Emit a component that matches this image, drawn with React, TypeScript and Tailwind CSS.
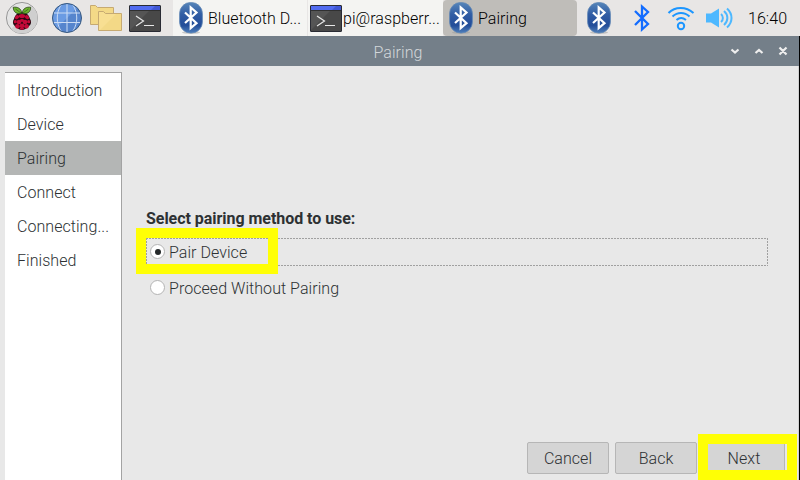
import React from "react";

const face = "font-['Roboto'] font-light text-[16px] leading-[20px] tracking-[0.05px] whitespace-nowrap";
const light = `${face} pt-0.5`;

function RaspberryIcon() {
  const drupes = [[15.3, 22.4], [28.7, 22.4], [19, 22.7], [25, 22.7], [17.5, 27], [26.5, 27], [22, 26.5]];
  return (
    <svg width="44" height="36" viewBox="0 0 44 36" className="shrink-0">
      <circle cx="22" cy="18" r="15.6" fill="#e4e4e4" stroke="#999" />
      <path d="M11 29 33 7A15 15 0 0 1 11 29Z" fill="#cfcfcf" />
      <path d="M22 12c-4 0-7 3-8 7-2 3-1 6 2 8 2 2 4 3 6 3s4-1 6-3c3-2 4-5 2-8-1-4-4-7-8-7Z" fill="#280911" />
      <g fill="#c30938">
        <ellipse cx="22" cy="16" rx="3.1" ry="2.1" />
        <ellipse cx="17" cy="17.2" rx="2.3" ry="1.8" transform="rotate(-40 17 17.2)" />
        <ellipse cx="27" cy="17.2" rx="2.3" ry="1.8" transform="rotate(40 27 17.2)" />
        {drupes.map(([x, y]) => (
          <circle key={`${x}-${y}`} cx={x} cy={y - 0.7} r={x < 16 || x > 28 ? 1.6 : 2.35} />
        ))}
        <ellipse cx="22" cy="20.3" rx="2" ry="1.6" />
        <ellipse cx="22" cy="28.7" rx="2.2" ry="1.1" />
      </g>
      <path d="M21.8 13.4C17 14.5 13.5 12.5 13.2 7.3c4-.7 8.2 1 8.6 6.1ZM22.2 13.4c4.8 1.1 8.3-.9 8.6-6.1-4-.7-8.2 1-8.6 6.1Z" fill="#6cb52d" stroke="#284018" strokeWidth=".8" />
      <path d="m15.5 9 5.5 4m7.500-4L23 13" stroke="#315820" strokeWidth=".7" />
    </svg>
  );
}

function GlobeIcon() {
  return (
    <svg width="32" height="36" viewBox="0 0 32 36" fill="none" className="shrink-0">
      <circle cx="16" cy="18" r="14.5" fill="#5685cd" />
      <path d="M5.7 28.3A14.5 14.5 0 0 1 26.3 7.7Z" fill="#6a9be3" />
      <path d="M16 4v28M3 13h26M2 22.5h28M10 5c-5 8-5 18 0 26M22 5c5 8 5 18 0 26" stroke="#cbdcf4" />
      <circle cx="16" cy="18" r="14.5" stroke="#38597f" />
    </svg>
  );
}

function FoldersIcon() {
  return (
    <svg width="32" height="36" viewBox="0 0 32 36" className="shrink-0">
      <g fill="#f3d987" stroke="#c6aa72">
        <path d="M.5 24.5v-19h5l2 2h16v17Z" />
        <path d="M8.5 30.5v-19h5l2 2h16v17Z" />
      </g>
      <path d="M9 30V12h4l2 2h11L10 30Z" fill="#f8df92" />
    </svg>
  );
}

function TerminalIcon() {
  return (
    <svg width="32" height="36" viewBox="0 0 32 36" fill="none" className="shrink-0">
      <rect x=".5" y="5.5" width="31" height="26" rx=".5" fill="#484848" stroke="#292b34" />
      <path d="M1 31V10h20L1 30Z" fill="#555" />
      <path d="M1 6h30v4H1Z" fill="#4057d5" />
      <path d="M1 6h25l-4 4H1Z" fill="#526cf0" />
      <path d="M1 10.5h30" stroke="#303030" />
      <path d="m7 16 7.5 5L7 26M15 25.5h10" stroke="#e7e7e7" strokeWidth="1.2" />
    </svg>
  );
}

function BluetoothBadge() {
  return (
    <svg width="24" height="36" viewBox="0 0 24 36" fill="none" className="shrink-0">
      <defs>
        <linearGradient id="badge" x1="0" y1="0" x2="0" y2="1">
          <stop stopColor="#5685b9" />
          <stop offset=".4" stopColor="#305ca4" />
          <stop offset=".75" stopColor="#234d99" />
          <stop offset="1" stopColor="#4e7fbb" />
        </linearGradient>
      </defs>
      <ellipse cx="12" cy="32.5" rx="9" ry="1.5" fill="#999" opacity=".5" />
      <rect x=".6" y="2.5" width="22.8" height="30.5" rx="11" fill="url(#badge)" stroke="#6087b5" strokeWidth=".8" />
      <path d="m6 12.500 11.500 10.700-5.800 5V7.500l5.800 5L6 23" stroke="#fff" strokeWidth="2.2" />
    </svg>
  );
}

function Task({ label, active = false, terminal = false, width }: { label: string; active?: boolean; terminal?: boolean; width: string }) {
  return (
    <div className={`flex h-9 shrink-0 items-center ${width} ${active ? "rounded-sm bg-[#bfbdb9]" : "bg-[#f4f4f2]"} ${terminal ? "border-l border-[#e8e6e5] pl-[2px]" : "pl-[6px]"}`}>
      {terminal ? <TerminalIcon /> : <BluetoothBadge />}
      <span className={`${light} text-black ${terminal ? "pl-px" : "pl-[5px]"}`}>{label}</span>
    </div>
  );
}

function Taskbar() {
  return (
    <header className="flex h-9 items-center bg-[#e8e6e5]">
      <RaspberryIcon />
      <div className="flex gap-[7px] pl-[7px]">
        <GlobeIcon />
        <FoldersIcon />
        <TerminalIcon />
      </div>
      <div className="ml-[12px] flex">
        <Task label="Bluetooth D..." width="w-[134px]" />
        <Task label="pi@raspberr..." terminal width="w-[136px]" />
        <Task label="Pairing" active width="w-[134px]" />
      </div>
      <div className="flex pl-[10px]">
        <BluetoothBadge />
        <svg width="32" height="36" viewBox="0 0 32 36" fill="none" className="ml-[15px]">
          <path d="m9 11 13 13-6 5.500V6.500l6 5.500L9 25" stroke="#126cff" strokeWidth="2.3" />
        </svg>
        <svg width="28" height="36" viewBox="0 0 28 36" fill="none" className="ml-[9px]">
          <g stroke="#1c96ff" strokeWidth="2">
            <path d="M1.500 13C8 6.200 19 6.200 26.500 13M5.500 16.500c5-4.800 12-4.800 17 0M9.500 20c2.800-2.500 6.500-2.500 9.500 0" />
            <circle cx="14" cy="26" r="3.2" />
          </g>
        </svg>
        <svg width="28" height="36" viewBox="0 0 28 36" fill="none" className="ml-[10px]">
          <path d="M1 13.500h5l8-5v19l-8-5H1Z" fill="#4db8ff" />
          <path d="M16 14c2.500 2 2.500 6 0 8M19 11c4.500 4 4.500 10 0 14M22 8.500c6 5.500 6 13.500 0 19" stroke="#4db8ff" strokeWidth="2" />
        </svg>
      </div>
      <time className={`${light} ml-[15px] text-black`}>16:40</time>
    </header>
  );
}

function TitleBar() {
  return (
    <div className="flex h-[30px] items-center bg-[#747f89] pr-[10px] text-[#eee]">
      <h1 className={`${face} flex-1 pl-[67px] pt-1 text-center text-[#d3d7da]`}>Pairing</h1>
      <svg width="60" height="12" viewBox="0 0 60 12" fill="none" stroke="currentColor" strokeWidth="2.2">
        <path d="m2.500 4.500 3.500 3 3.500-3M26.500 8l3.500-3 3.500 3M50.500 2.500l7 7m0-7-7 7" />
      </svg>
    </div>
  );
}

function RadioMark({ checked = false }: { checked?: boolean }) {
  return (
    <span className="mb-px flex h-[15px] w-[15px] shrink-0 items-center justify-center rounded-full border border-[#b3b3b3] bg-white">
      {checked && <span className="h-[6px] w-[6px] rounded-full bg-[#242829]" />}
    </span>
  );
}

const steps = ["Introduction", "Device", "Pairing", "Connect", "Connecting...", "Finished"];

export default function App() {
  return (
    <div className="relative flex h-[480px] w-[800px] flex-col overflow-hidden bg-[#e8e8e8] text-[#2d3133]">
      <Taskbar />
      <div className="flex min-h-0 flex-1 flex-col border-r border-black">
        <TitleBar />
        <div className="flex min-h-0 flex-1 border-r border-[#d0d0d0]">
          <nav className="ml-[5px] mt-[6px] w-[117px] shrink-0 border-r border-t border-[#a3a3a3] bg-white">
            {steps.map((step) => (
              <div key={step} className={`${light} flex h-[34px] items-center pl-3 ${step === "Pairing" ? "bg-[#b4b6b5]" : ""}`}>
                {step}
              </div>
            ))}
          </nav>
          <main className="flex flex-1 flex-col pl-6">
            <h2 className="mt-[143px] font-['Roboto'] text-[16px] font-bold leading-[20px] tracking-[-0.04px]">Select pairing method to use:</h2>
            <div className="mt-[9px] flex h-[28px] w-[622px] items-center gap-1 pl-1 [background:linear-gradient(90deg,#a0a0a0_2px,transparent_2px)_0_0/3px_1px_repeat-x,linear-gradient(90deg,#a0a0a0_2px,transparent_2px)_0_100%/3px_1px_repeat-x,linear-gradient(#a0a0a0_2px,transparent_2px)_0_0/1px_3px_repeat-y,linear-gradient(#a0a0a0_2px,transparent_2px)_100%_0/1px_3px_repeat-y]">
              <RadioMark checked />
              <span className={light}>Pair Device</span>
            </div>
            <div className="mt-[8px] flex h-[28px] items-center gap-1 pl-1">
              <RadioMark />
              <span className={light}>Proceed Without Pairing</span>
            </div>
            <div className="mb-[6px] mr-[13px] mt-auto flex justify-end gap-[6px]">
              {["Cancel", "Back", "Next"].map((label) => (
                <button key={label} className={`${light} h-8 w-[82px] rounded-xs border border-[#b6b6b6] bg-[#d5d5d5]`}>
                  {label}
                </button>
              ))}
            </div>
          </main>
        </div>
      </div>
      <div className="pointer-events-none absolute left-[136px] top-[228px] h-[46px] w-[142px] border-[10px] border-[#ffff05]" />
      <div className="pointer-events-none absolute left-[698px] top-[434px] h-[46px] w-[99px] border-[10px] border-[#ffff05]" />
    </div>
  );
}
